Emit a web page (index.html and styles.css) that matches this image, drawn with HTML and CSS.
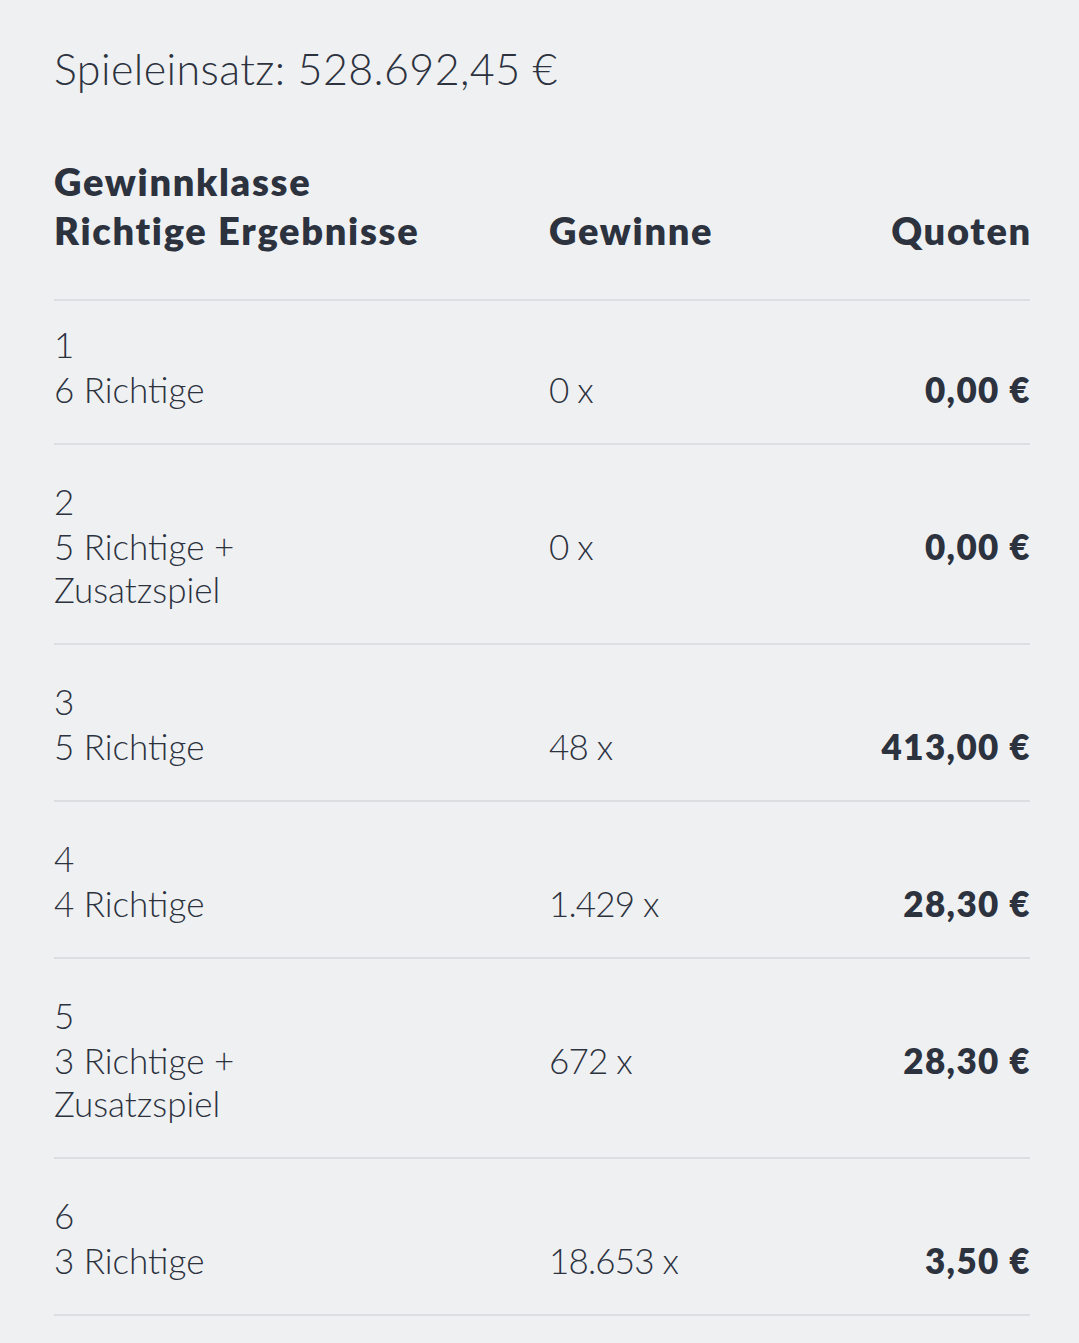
FILE: index.html
```html
<!DOCTYPE html>
<html lang="de">
<head>
<meta charset="utf-8">
<link rel="stylesheet" href="styles.css">
</head>
<body>
<main class="page">
  <h1 class="stake">Spieleinsatz: 528.692,45 €</h1>
  <div class="table">
    <div class="head">
      <div class="h-class">Gewinnklasse<br>Richtige Ergebnisse</div>
      <div class="h-wins">Gewinne</div>
      <div class="h-quote">Quoten</div>
    </div>
    <div class="row first">
      <div class="num">1</div>
      <div class="label">6 Richtige</div>
      <div class="wins">0 x</div>
      <div class="quote">0,00 €</div>
    </div>
    <div class="row">
      <div class="num">2</div>
      <div class="label">5 Richtige +<br>Zusatzspiel</div>
      <div class="wins">0 x</div>
      <div class="quote">0,00 €</div>
    </div>
    <div class="row">
      <div class="num">3</div>
      <div class="label">5 Richtige</div>
      <div class="wins">48 x</div>
      <div class="quote">413,00 €</div>
    </div>
    <div class="row">
      <div class="num">4</div>
      <div class="label">4 Richtige</div>
      <div class="wins">1.429 x</div>
      <div class="quote">28,30 €</div>
    </div>
    <div class="row">
      <div class="num">5</div>
      <div class="label">3 Richtige +<br>Zusatzspiel</div>
      <div class="wins">672 x</div>
      <div class="quote">28,30 €</div>
    </div>
    <div class="row">
      <div class="num">6</div>
      <div class="label">3 Richtige</div>
      <div class="wins">18.653 x</div>
      <div class="quote">3,50 €</div>
    </div>
  </div>
</main>
</body>
</html>
```
FILE: styles.css
```css
html, body {
  margin: 0;
  padding: 0;
  background: #eff0f2;
}
body {
  font-family: Lato, "Noto Sans", sans-serif;
  color: #2c323e;
}
.page {
  padding: 44px 49px 0 54px;
}
.stake {
  margin: 0;
  font-size: 43px;
  font-weight: 300;
  letter-spacing: 0.4px;
  line-height: 50px;
}
.table {
  margin-top: 63px;
}
.head {
  display: grid;
  grid-template-columns: 495px 1fr auto;
  align-items: end;
  font-size: 38px;
  font-weight: 800;
  letter-spacing: 1.7px;
  line-height: 49px;
  padding-bottom: 44px;
  border-bottom: 2px solid #dcdee2;
}
.h-quote {
  text-align: right;
  margin-right: -2px;
}
.row {
  display: grid;
  grid-template-columns: 495px 1fr auto;
  grid-template-rows: auto auto;
  row-gap: 2px;
  font-size: 35px;
  font-weight: 300;
  line-height: 43px;
  padding: 35px 0 32px;
  border-bottom: 2px solid #dcdee2;
}
.row.first {
  padding-top: 22px;
}
.num {
  grid-column: 1 / -1;
  grid-row: 1;
}
.label {
  grid-column: 1;
  grid-row: 2;
}
.wins {
  grid-column: 2;
  grid-row: 2;
  letter-spacing: -0.8px;
}
.quote {
  grid-column: 3;
  grid-row: 2;
  font-weight: 800;
  letter-spacing: 1.4px;
  margin-right: -1px;
  text-align: right;
}
```
